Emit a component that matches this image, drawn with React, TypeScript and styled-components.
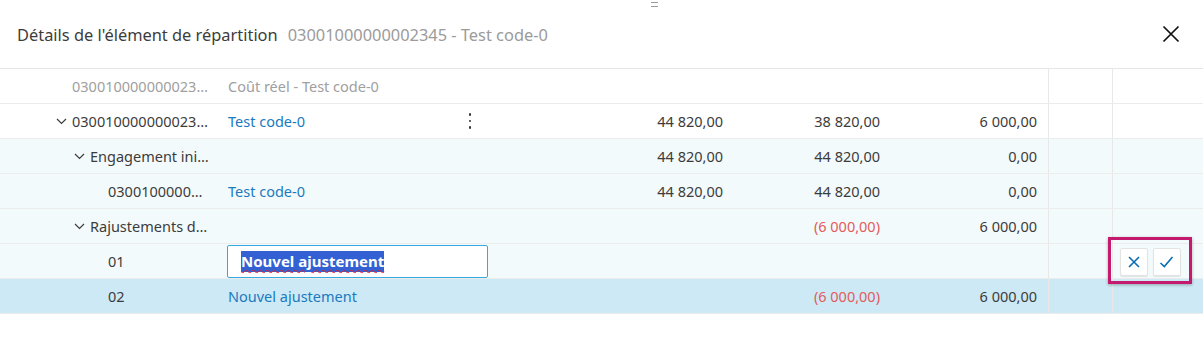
import React from "react";
import styled, { createGlobalStyle, css } from "styled-components";

const GlobalStyle = createGlobalStyle`
  html, body { margin: 0; padding: 0; background: #ffffff; }
  body { font-family: "Noto Sans", "Open Sans", sans-serif; color: #3c3c3c; }
  * { box-sizing: border-box; }
`;

const Page = styled.div`
  width: 1203px;
  height: 344px;
  background: #fff;
  position: relative;
  overflow: hidden;
`;

const DragHandle = styled.div`
  position: absolute;
  left: 651px;
  top: 2px;
  width: 7px;
  height: 5px;
  border-top: 1px solid #9a9a9a;
  border-bottom: 1px solid #9a9a9a;
`;

const Header = styled.div`
  height: 69px;
  display: flex;
  align-items: center;
  padding: 0 17px;
  border-bottom: 1px solid #e6e6e6;
  box-shadow: 0 1px 2px rgba(0, 0, 0, 0.04);
`;

const Title = styled.div`
  font-size: 16.4px;
  color: #3c3c3c;
  white-space: nowrap;
`;

const Subtitle = styled.span`
  margin-left: 10px;
  color: #9b9b9b;
`;

const CloseButton = styled.button`
  margin-left: auto;
  margin-right: 3px;
  width: 24px;
  height: 24px;
  padding: 0;
  border: none;
  background: transparent;
  display: flex;
  align-items: center;
  justify-content: center;
  cursor: pointer;
`;

const Table = styled.div`
  display: flex;
  flex-direction: column;
`;

const Row = styled.div<{ $bg?: string }>`
  display: grid;
  grid-template-columns: 215px 275px 245px 157px 156px 64px 1fr;
  height: 35px;
  border-bottom: 1px solid #ececec;
  background: ${(p) => p.$bg || "#ffffff"};
  font-size: 14.5px;
`;

const Cell = styled.div<{ $align?: "left" | "right"; $divider?: boolean; $pr?: number }>`
  display: flex;
  align-items: center;
  min-width: 0;
  position: relative;
  justify-content: ${(p) => (p.$align === "right" ? "flex-end" : "flex-start")};
  padding: 0 ${(p) => p.$pr ?? 12}px 0 12px;
  ${(p) =>
    p.$divider &&
    css`
      border-left: 1px solid #e8e8e8;
    `}
`;

const CodeCell = styled.div<{ $level: number }>`
  display: flex;
  align-items: center;
  min-width: 0;
  padding-left: ${(p) => 56 + p.$level * 18}px;
  padding-right: 5px;
`;

const ChevronSlot = styled.span`
  width: 16px;
  flex: 0 0 16px;
  display: flex;
  align-items: center;
`;

const Ellipsis = styled.span<{ $muted?: boolean }>`
  overflow: hidden;
  text-overflow: ellipsis;
  white-space: nowrap;
  color: ${(p) => (p.$muted ? "#a0a0a0" : "#3c3c3c")};
`;

const DescCell = styled.div`
  display: flex;
  align-items: center;
  padding-left: 13px;
  padding-right: 16px;
  min-width: 0;
`;

const Link = styled.span`
  color: #1a7ac0;
  white-space: nowrap;
`;

const Muted = styled.span`
  color: #a0a0a0;
  white-space: nowrap;
`;

const Kebab = styled.span`
  margin-left: auto;
  margin-right: 3px;
  display: flex;
  flex-direction: column;
  gap: 4px;
  span {
    width: 2.5px;
    height: 2.5px;
    background: #333;
    border-radius: 1px;
  }
`;

const Amount = styled.span<{ $negative?: boolean }>`
  color: ${(p) => (p.$negative ? "#e25c5c" : "#3c3c3c")};
  white-space: nowrap;
`;

const EditBox = styled.div`
  flex: 0 0 261px;
  height: 33px;
  margin-left: -1px;
  border: 1px solid #3aa8e0;
  border-radius: 2px;
  background: #fff;
  display: flex;
  align-items: center;
  padding-left: 13px;
`;

const Selected = styled.span`
  background: #3360d2;
  color: #fff;
  font-weight: 700;
  font-size: 15px;
  line-height: 21px;
  text-decoration: underline wavy #e0202a;
  text-decoration-thickness: 1px;
  text-underline-offset: 2px;
`;

const ActionFrame = styled.div`
  position: absolute;
  right: 11px;
  top: -7px;
  width: 84px;
  height: 47px;
  border: 3px solid #c31a6e;
  box-shadow: 0 1px 3px rgba(0, 0, 0, 0.3);
  display: flex;
  align-items: center;
  justify-content: center;
  gap: 5px;
  padding-top: 2px;
  background: transparent;
  z-index: 2;
`;

const ActionButton = styled.button`
  width: 28px;
  height: 28px;
  padding: 0;
  border: 1px solid #e3e3e3;
  border-radius: 2px;
  background: #fff;
  box-shadow: 0 1px 1px rgba(0, 0, 0, 0.08);
  display: flex;
  align-items: center;
  justify-content: center;
`;

const Chevron = () => (
  <svg width="11" height="7" viewBox="0 0 11 7" fill="none">
    <path d="M1 1l4.5 4.5L10 1" stroke="#3c3c3c" strokeWidth="1.2" />
  </svg>
);

type RowData = {
  level: number;
  chevron?: boolean;
  code: string;
  codeMuted?: boolean;
  desc?: React.ReactNode;
  a?: string;
  b?: string;
  bNeg?: boolean;
  c?: string;
  bg?: string;
  edit?: boolean;
};

const LIGHT = "#f3fafb";
const SEL = "#cde9f5";

const rows: RowData[] = [
  { level: 0, code: "030010000000023450", codeMuted: true, desc: <Muted>Coût réel - Test code-0</Muted> },
  { level: 0, chevron: true, code: "030010000000023450", desc: "kebab", a: "44 820,00", b: "38 820,00", c: "6 000,00" },
  { level: 1, chevron: true, code: "Engagement initial", a: "44 820,00", b: "44 820,00", c: "0,00", bg: LIGHT },
  { level: 2, code: "0300100000002345", desc: <Link>Test code-0</Link>, a: "44 820,00", b: "44 820,00", c: "0,00", bg: LIGHT },
  { level: 1, chevron: true, code: "Rajustements de coût", b: "(6 000,00)", bNeg: true, c: "6 000,00", bg: LIGHT },
  { level: 2, code: "01", edit: true, bg: LIGHT },
  { level: 2, code: "02", desc: <Link>Nouvel ajustement</Link>, b: "(6 000,00)", bNeg: true, c: "6 000,00", bg: SEL },
];

export default function App() {
  return (
    <Page>
      <GlobalStyle />
      <DragHandle />
      <Header>
        <Title>
          Détails de l'élément de répartition
          <Subtitle>03001000000002345 - Test code-0</Subtitle>
        </Title>
        <CloseButton aria-label="Fermer">
          <svg width="18" height="18" viewBox="0 0 18 18">
            <path d="M1.5 1.5l15 15M16.5 1.5l-15 15" stroke="#111" strokeWidth="1.7" />
          </svg>
        </CloseButton>
      </Header>
      <Table>
        {rows.map((r, i) => (
          <Row key={i} $bg={r.bg}>
            <CodeCell $level={r.level}>
              <ChevronSlot>{r.chevron && <Chevron />}</ChevronSlot>
              <Ellipsis $muted={r.codeMuted}>{r.code}</Ellipsis>
            </CodeCell>
            <DescCell>
              {r.edit ? (
                <EditBox>
                  <Selected>Nouvel ajustement</Selected>
                </EditBox>
              ) : r.desc === "kebab" ? (
                <>
                  <Link>Test code-0</Link>
                  <Kebab>
                    <span />
                    <span />
                    <span />
                  </Kebab>
                </>
              ) : (
                r.desc
              )}
            </DescCell>
            <Cell $align="right">{r.a && <Amount>{r.a}</Amount>}</Cell>
            <Cell $align="right">{r.b && <Amount $negative={r.bNeg}>{r.b}</Amount>}</Cell>
            <Cell $align="right" $pr={11}>
              {r.c && <Amount>{r.c}</Amount>}
            </Cell>
            <Cell $divider />
            <Cell $divider>
              {r.edit && (
                <ActionFrame>
                  <ActionButton aria-label="Annuler">
                    <svg width="14" height="14" viewBox="0 0 14 14">
                      <path d="M2 2l10 10M12 2L2 12" stroke="#0a6db3" strokeWidth="1.6" />
                    </svg>
                  </ActionButton>
                  <ActionButton aria-label="Valider">
                    <svg width="15" height="14" viewBox="0 0 15 14">
                      <path d="M1.5 8l3.8 3.5L13.5 2" stroke="#0a6db3" strokeWidth="1.6" fill="none" />
                    </svg>
                  </ActionButton>
                </ActionFrame>
              )}
            </Cell>
          </Row>
        ))}
      </Table>
    </Page>
  );
}
